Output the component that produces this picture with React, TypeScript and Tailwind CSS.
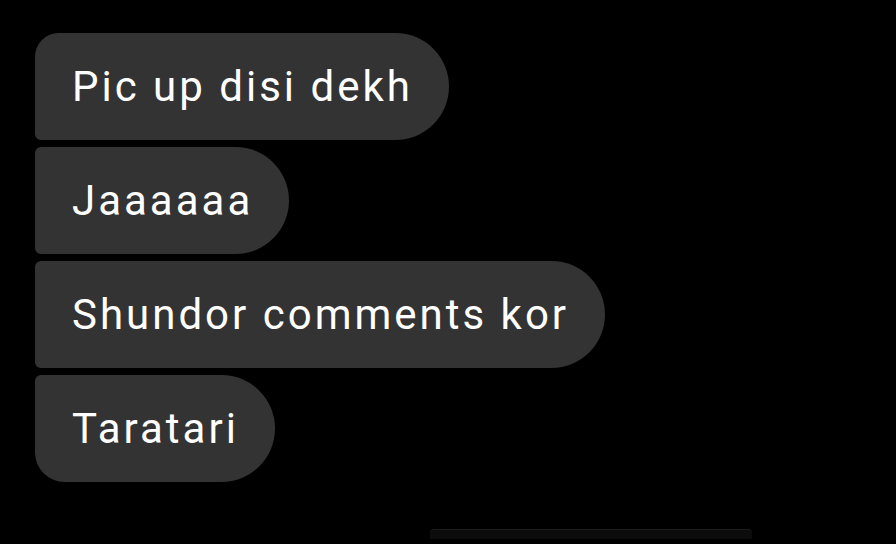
const messages = ["Pic up disi dekh", "Jaaaaaa", "Shundor comments kor", "Taratari"];

export default function App() {
  return (
    <div className="h-[544px] w-[896px] overflow-hidden bg-black font-['Roboto',sans-serif]">
      <div className="flex flex-col items-start gap-[7px] pl-[35px] pt-[33px]">
        {messages.map((m, i) => {
          const first = i === 0;
          const last = i === messages.length - 1;
          return (
            <div
              key={i}
              className={
                "flex h-[107px] items-center rounded-r-[54px] bg-[#333333] pl-[37px] pr-[36px] text-[42px] leading-none tracking-[3px] text-white " +
                (first ? "rounded-tl-[24px] " : "rounded-tl-[6px] ") +
                (last ? "rounded-bl-[30px]" : "rounded-bl-[6px]")
              }
            >
              {m}
            </div>
          );
        })}
      </div>
      <div className="ml-[430px] mt-[47px] h-[10px] w-[322px] rounded-t-[4px] border-t border-[#1c1c1c] bg-[#0c0c0c]" />
    </div>
  );
}
